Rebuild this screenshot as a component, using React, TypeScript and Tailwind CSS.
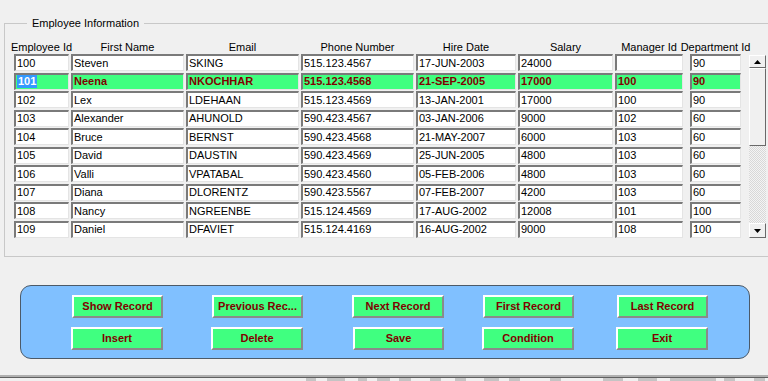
import React from 'react';

type Emp = [string, string, string, string, string, string, string, string];

const rows: Emp[] = [
  ['100', 'Steven', 'SKING', '515.123.4567', '17-JUN-2003', '24000', '', '90'],
  ['101', 'Neena', 'NKOCHHAR', '515.123.4568', '21-SEP-2005', '17000', '100', '90'],
  ['102', 'Lex', 'LDEHAAN', '515.123.4569', '13-JAN-2001', '17000', '100', '90'],
  ['103', 'Alexander', 'AHUNOLD', '590.423.4567', '03-JAN-2006', '9000', '102', '60'],
  ['104', 'Bruce', 'BERNST', '590.423.4568', '21-MAY-2007', '6000', '103', '60'],
  ['105', 'David', 'DAUSTIN', '590.423.4569', '25-JUN-2005', '4800', '103', '60'],
  ['106', 'Valli', 'VPATABAL', '590.423.4560', '05-FEB-2006', '4800', '103', '60'],
  ['107', 'Diana', 'DLORENTZ', '590.423.5567', '07-FEB-2007', '4200', '103', '60'],
  ['108', 'Nancy', 'NGREENBE', '515.124.4569', '17-AUG-2002', '12008', '101', '100'],
  ['109', 'Daniel', 'DFAVIET', '515.124.4169', '16-AUG-2002', '9000', '108', '100'],
];

// column widths + left offsets, measured off the form
const cols = [
  { label: 'Employee Id', cls: 'w-[55px]' },
  { label: 'First Name', cls: 'w-[113px] ml-[2px]' },
  { label: 'Email', cls: 'w-[113px] ml-[2px]' },
  { label: 'Phone Number', cls: 'w-[113px] ml-[2px]' },
  { label: 'Hire Date', cls: 'w-[100px] ml-[2px]' },
  { label: 'Salary', cls: 'w-[95px] ml-[2px]' },
  { label: 'Manager Id', cls: 'w-[68px] ml-[2px]' },
  { label: 'Department Id', cls: 'w-[51px] ml-[7px]' },
];

const topButtons = [
  { label: 'Show Record', cls: 'ml-[51px] w-[91px]' },
  { label: 'Previous Rec...', cls: 'ml-[49px] w-[91px]' },
  { label: 'Next Record', cls: 'ml-[49px] w-[92px]' },
  { label: 'First Record', cls: 'ml-[39px] w-[91px]' },
  { label: 'Last Record', cls: 'ml-[43px] w-[91px]' },
];

const bottomButtons = [
  { label: 'Insert', cls: 'ml-[50px] w-[92px]' },
  { label: 'Delete', cls: 'ml-[48px] w-[92px]' },
  { label: 'Save', cls: 'ml-[50px] w-[91px]' },
  { label: 'Condition', cls: 'ml-[38px] w-[92px]' },
  { label: 'Exit', cls: 'ml-[42px] w-[92px]' },
];

const dashes = [
  'ml-[306px] w-[10px]', 'ml-[11px] w-[18px]', 'ml-[13px] w-[9px]', 'ml-[10px] w-[13px]',
  'ml-[9px] w-[12px]', 'ml-[19px] w-[11px]', 'ml-[14px] w-[11px]', 'ml-[18px] w-[15px]',
  'ml-[10px] w-[11px]', 'ml-[30px] w-[11px]', 'ml-[42px] w-[20px]', 'ml-[15px] w-[19px]',
  'ml-[13px] w-[46px]', 'ml-[8px] w-[11px]', 'ml-[19px] w-[11px]',
];

const FormButton = ({ label, cls }: { label: string; cls: string }) => (
  <button
    className={`${cls} h-[23px] bg-[#40ff80] text-[#800000] font-bold text-[11px] border-t-2 border-l-2 border-t-white border-l-white border-b-2 border-r-2 border-b-[#8a8a8a] border-r-[#8a8a8a] flex items-center justify-center whitespace-nowrap`}
  >
    {label}
  </button>
);

const ScrollBar = () => (
  <div className="ml-[8px] mt-[1px] w-[17px] h-[183px] flex flex-col">
    <div className="h-[13px] bg-[#f0f0f0] border-t border-l border-t-white border-l-white border-b border-r border-b-[#696969] border-r-[#696969] flex items-center justify-center">
      <svg width="7" height="4" viewBox="0 0 7 4"><path d="M3.5 0L7 4H0z" fill="#000" /></svg>
    </div>
    <div className="h-[78px] bg-[#f0f0f0] border-t border-l border-t-white border-l-white border-b border-r border-b-[#696969] border-r-[#696969]" />
    <div className="flex-1 bg-[repeating-conic-gradient(#d8d8d8_0%_25%,#f4f4f4_0%_50%)] bg-[length:2px_2px]" />
    <div className="h-[15px] bg-[#f0f0f0] border-t border-l border-t-white border-l-white border-b border-r border-b-[#696969] border-r-[#696969] flex items-center justify-center">
      <svg width="7" height="4" viewBox="0 0 7 4"><path d="M0 0H7L3.5 4z" fill="#000" /></svg>
    </div>
  </div>
);

export default function App() {
  return (
    <div className="w-[768px] h-[381px] bg-[#f0f0f0] overflow-hidden flex flex-col font-['Liberation_Sans',Arial,sans-serif] text-[11px] text-black">
      <fieldset className="ml-[4px] mt-[16px] w-[800px] h-[241px] border border-[#c8c8c8] px-[9px] pb-[18px]">
        <legend className="ml-[13px] px-[5px] leading-[14px] text-[11px]">Employee Information</legend>

        <div className="flex mt-[10px] h-[14px]">
          {cols.map(c => (
            <div key={c.label} className={`${c.cls} flex justify-center whitespace-nowrap leading-[13px] pt-[1px]`}>
              <span className="whitespace-nowrap">{c.label}</span>
            </div>
          ))}
        </div>

        <div className="flex">
          <div className="flex flex-col gap-y-[1.5px]">
            {rows.map((r, i) => {
              const sel = i === 1;
              return (
                <div key={r[0]} className="flex">
                  {r.map((v, j) => (
                    <div
                      key={j}
                      className={`${cols[j].cls} h-[17px] border-t-2 border-l-2 border-t-[#7a7a7a] border-l-[#7a7a7a] border-b border-r border-b-[#e4e4e4] border-r-[#e4e4e4] pl-[1px] flex items-center leading-none whitespace-nowrap overflow-hidden ${
                        sel ? 'bg-[#40ff80] text-[#800000] font-bold' : 'bg-white'
                      }`}
                    >
                      {sel && j === 0 ? <span className="bg-[#3399ff] text-white px-[1px] py-[1px]">{v}</span> : v}
                    </div>
                  ))}
                </div>
              );
            })}
          </div>
          <ScrollBar />
        </div>
      </fieldset>

      <div className="ml-[20px] mt-[28px] w-[730px] h-[74px] bg-[#80c0ff] border-[1.5px] border-[#4c5a68] rounded-[11px] flex flex-col pt-[9px] gap-y-[9px]">
        <div className="flex">
          {topButtons.map(b => <FormButton key={b.label} {...b} />)}
        </div>
        <div className="flex">
          {bottomButtons.map(b => <FormButton key={b.label} {...b} />)}
        </div>
      </div>

      <div className="mt-auto h-[2px] bg-[#b0b0b0]" />
      <div className="h-[1px] bg-[#606060]" />
      <div className="flex h-[3px]">
        {dashes.map((d, i) => <div key={i} className={`${d} h-[3px] bg-[#c4c4c4]`} />)}
      </div>
    </div>
  );
}
